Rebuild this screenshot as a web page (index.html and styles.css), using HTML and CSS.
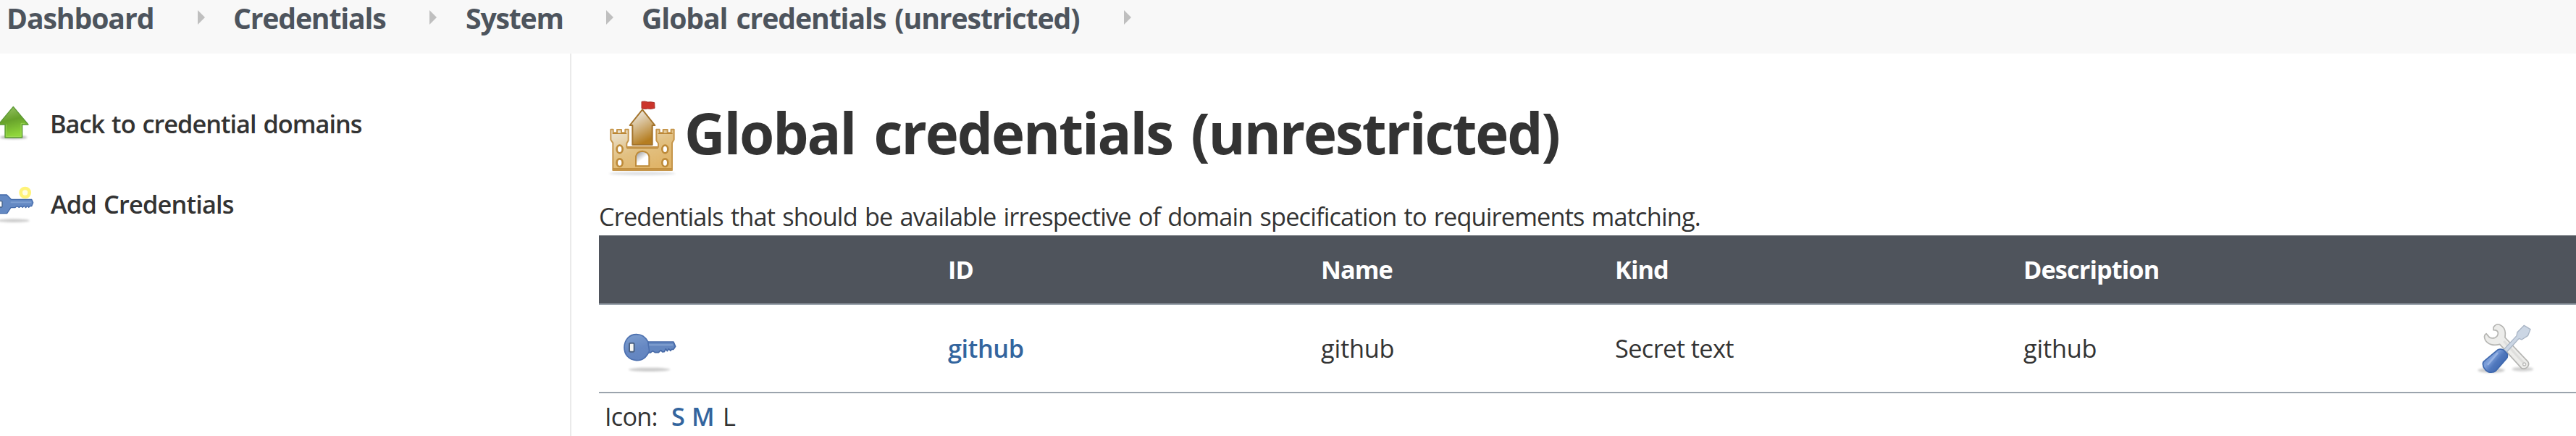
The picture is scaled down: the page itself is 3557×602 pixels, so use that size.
FILE: index.html
```html
<!DOCTYPE html>
<html lang="en">
<head>
<meta charset="utf-8">
<title>Global credentials (unrestricted)</title>
<link rel="stylesheet" href="styles.css">
</head>
<body>
<nav class="breadcrumbs">
  <a class="crumb crumb-dashboard">Dashboard</a><i class="chevron"></i>
  <a class="crumb crumb-credentials">Credentials</a><i class="chevron"></i>
  <a class="crumb crumb-system">System</a><i class="chevron"></i>
  <a class="crumb crumb-global">Global credentials (unrestricted)</a><i class="chevron"></i>
</nav>
<div class="page">
  <aside class="side-panel">
    <a class="task">
      <svg class="task-icon" width="50" height="56" viewBox="0 30 150 168">
        <defs>
          <linearGradient id="leaf" x1="0" y1="0" x2="0.25" y2="1"><stop offset="0" stop-color="#9cc66a"/><stop offset=".5" stop-color="#67a12b"/><stop offset="1" stop-color="#8fd63a"/></linearGradient>
          <filter id="soft" x="-30%" y="-100%" width="160%" height="300%"><feGaussianBlur stdDeviation="5"/></filter>
        </defs>
        <ellipse cx="56" cy="176" rx="56" ry="7" fill="#000" opacity=".3" filter="url(#soft)"/>
        <path d="M55 49 L117 123 H92 V177 H21 V123 H-7 Z" fill="url(#leaf)" stroke="#5c9a35" stroke-width="4" stroke-linejoin="round"/>
        <path d="M26 122 V172 H87 V118 H103" fill="none" stroke="#a5dc62" stroke-width="3" opacity=".7"/>
      </svg>
      <span class="task-label">Back to credential domains</span>
    </a>
    <a class="task">
      <svg class="task-icon" width="50" height="60" viewBox="0 360 150 180">
        <ellipse cx="56" cy="524" rx="66" ry="7" fill="#000" opacity=".2" filter="url(#soft)"/>
        <circle cx="104" cy="408" r="18" fill="#fffde0" stroke="#fff26a" stroke-width="14" opacity=".9"/>
        <path d="M-2 417 H28 L46 436 H131 L137 449 L131 464 H124 L119 469 L113 463 L107 470 L100 463 L94 469 L87 464 L79 469 L70 464 L62 470 H45 L29 494 H-2 Z" fill="#6489c3" stroke="#446bab" stroke-width="4" stroke-linejoin="round"/>
        <path d="M44 448 H130" stroke="#7fa0d2" stroke-width="6"/>
        <rect x="-8" y="443" width="17" height="25" rx="3" fill="#fff" stroke="#476287" stroke-width="4"/>
      </svg>
      <span class="task-label task-add">Add Credentials</span>
    </a>
  </aside>
  <main class="main-panel">
    <h1 class="heading">
      <svg class="castle" width="110" height="110" viewBox="90 45 330 330">
        <defs>
          <linearGradient id="tower" x1="0" y1="0" x2=".4" y2="1"><stop offset=".2" stop-color="#e9e2d4"/><stop offset="1" stop-color="#b57d20"/></linearGradient>
          <linearGradient id="wall" x1="0" y1="0" x2=".6" y2="1"><stop offset="0" stop-color="#ece7dc"/><stop offset=".55" stop-color="#e2c183"/><stop offset="1" stop-color="#e0b468"/></linearGradient>
          <linearGradient id="gate" x1="0" y1="0" x2=".7" y2="1"><stop offset=".1" stop-color="#9b9b9b"/><stop offset=".6" stop-color="#fff"/></linearGradient>
        </defs>
        <ellipse cx="260" cy="359" rx="138" ry="7" fill="#234" opacity=".15" filter="url(#soft)"/>
        <path d="M258 61 Q271 58 284 63 Q298 61 311 65 L312 88 Q298 93 284 90 Q270 93 258 89 Z" fill="#cb342b" stroke="#a92c27" stroke-width="3"/>
        <path d="M130 176 H140 V190 H156 V177 H174 V190 H190 V176 H203 V222 L196 234 V249 H327 V234 L319 222 V176 H332 V190 H347 V177 H365 V190 H380 V176 H392 V218 L384 232 V345 H139 V232 L130 219 Z" fill="url(#wall)" stroke="#c6964b" stroke-width="6" stroke-linejoin="round"/>
        <path d="M261 94 L313 159 H302 V240 H220 V159 H209 Z" fill="url(#tower)" stroke="#a3732b" stroke-width="6" stroke-linejoin="round"/>
        <path d="M137 193 H196 M326 193 H386 M196 254 H326 M140 339 H383" stroke="#b98432" stroke-width="4"/>
        <path d="M234 328 V287 Q238 268 261 266 Q285 269 289 288 V328 Z" fill="url(#gate)" stroke="#bd8a39" stroke-width="6"/>
        <g fill="#fff" stroke="#bd8a39" stroke-width="8"><ellipse cx="167" cy="258" rx="12" ry="16"/><ellipse cx="355" cy="258" rx="12" ry="16"/><ellipse cx="167" cy="314" rx="12" ry="16"/><ellipse cx="355" cy="314" rx="12" ry="16"/></g>
      </svg>
      <span class="heading-text">Global credentials (unrestricted)</span>
    </h1>
    <p class="description">Credentials that should be available irrespective of domain specification to requirements matching.</p>
    <table class="grid">
      <colgroup><col class="col-icon"><col class="col-id"><col class="col-name"><col class="col-kind"><col class="col-desc"><col></colgroup>
      <thead><tr><th></th><th>ID</th><th>Name</th><th>Kind</th><th>Description</th><th></th></tr></thead>
      <tbody><tr>
        <td class="icon-cell">
          <svg class="key" width="80" height="72" viewBox="51 66 240 216">
            <defs><linearGradient id="blue" x1="0" y1="0" x2=".3" y2="1"><stop offset=".2" stop-color="#7899cc"/><stop offset=".65" stop-color="#6688c3"/><stop offset="1" stop-color="#6385c0"/></linearGradient></defs>
            <ellipse cx="170" cy="244" rx="86" ry="8" fill="#000" opacity=".2" filter="url(#soft)"/>
            <path d="M164 129 H270 L278 148 L270 160 H262 L258 166 L250 158 L244 167 L238 158 L232 170 L224 171 L218 164 L208 173 H193 L184 167 L174 174 H162 Z" fill="#6487c0" stroke="#4568a6" stroke-width="5" stroke-linejoin="round"/>
            <path d="M158 142 H268" stroke="#82a1d0" stroke-width="6"/>
            <path d="M117 98 C141 98 153 109 164 128 L170 168 C156 194 143 206 117 206 C84 204 66 181 66 152 C67 121 86 98 117 98Z" fill="url(#blue)" stroke="#4c70af" stroke-width="5"/>
            <rect x="87" y="134" width="20" height="36" rx="5" fill="#f7f7f3" stroke="#4b6284" stroke-width="6"/>
          </svg>
        </td>
        <td><a class="link">github</a></td>
        <td class="github">github</td>
        <td>Secret text</td>
        <td class="github">github</td>
        <td class="icon-cell">
          <svg class="tools" width="90" height="80" viewBox="48 36 270 240">
            <defs><linearGradient id="handle" x1="0" y1="0" x2="1" y2=".8"><stop offset="0" stop-color="#426bb0"/><stop offset=".4" stop-color="#7fa1dc"/><stop offset=".6" stop-color="#5078bd"/><stop offset="1" stop-color="#365fa8"/></linearGradient></defs>
            <ellipse cx="120" cy="247" rx="56" ry="10" fill="#000" opacity=".2" filter="url(#soft)"/>
            <ellipse cx="250" cy="242" rx="44" ry="9" fill="#000" opacity=".18" filter="url(#soft)"/>
            <path d="M129 69 C137 57 148 54 157 59 C170 64 179 79 178 96 L177 111 L272 211 C281 227 266 245 246 239 L155 139 C128 147 105 139 95 121 C89 108 92 99 99 95 L112 110 Q122 116 135 112 Q149 105 148 91 Q146 80 129 80 Z" fill="#ececea" stroke="#b5b5b2" stroke-width="5" stroke-linejoin="round"/>
            <path d="M172 126 L255 217" stroke="#dededc" stroke-width="10"/>
            <circle cx="257" cy="222" r="6" fill="#fff" stroke="#bcbcba" stroke-width="4"/>
            <path d="M172 161 L225 104 L228 89 L256 61 L282 77 L272 103 L246 120 L235 115 L184 171 Z" fill="#cbd6e4" stroke="#a9b5c5" stroke-width="4" stroke-linejoin="round"/>
            <path d="M147 162 Q157 157 170 162 L186 178 Q190 190 183 199 L139 249 Q127 259 108 254 Q87 243 85 220 Q86 210 94 206 Z" fill="url(#handle)" stroke="#3e68ae" stroke-width="5"/>
            <path d="M145 177 L107 222" stroke="#a4bde8" stroke-width="8" stroke-linecap="round" opacity=".7"/>
          </svg>
        </td>
      </tr></tbody>
    </table>
    <div class="icon-size"><span class="size-label">Icon:</span><a class="link size-s">S</a><a class="link size-m">M</a><span class="size-l">L</span></div>
  </main>
</div>
</body>
</html>
```
FILE: styles.css
```css
* { box-sizing: border-box; }

body {
  margin: 0;
  overflow: hidden;
  background: #fff;
  color: #333;
  font: 34.3px/46px "Open Sans", "Noto Sans", sans-serif;
}

.breadcrumbs {
  display: flex;
  height: 74px;
  padding-left: 9px;
  background: #f8f8f8;
  color: #4d545d;
  font-size: 39.2px;
  font-weight: 700;
  line-height: 50px;
  letter-spacing: -0.9px;
}

.crumb { flex: none; white-space: nowrap; }
.crumb-dashboard { width: 264px; letter-spacing: -1.1px; }
.crumb-credentials { width: 271px; letter-spacing: -1.2px; }
.crumb-system { width: 195px; padding-left: 1px; letter-spacing: -1.2px; }
.crumb-global { width: 666px; letter-spacing: -1.1px; word-spacing: 3px; }

.chevron {
  flex: none;
  width: 10px;
  height: 20px;
  margin: 14px 39px 0 0;
  background: #bfbfbf;
  clip-path: polygon(0 0, 100% 50%, 0 100%);
}

.page { display: flex; height: 528px; }

.side-panel {
  flex: none;
  width: 789px;
  padding-top: 41px;
  border-right: 2px solid #eaeaea;
}

.task {
  display: flex;
  align-items: center;
  height: 111px;
  font-weight: 600;
  letter-spacing: -1px;
  word-spacing: 2px;
}

.task-icon { flex: none; margin-bottom: 3px; }
.task-label { margin-left: 19px; }
.task-add { margin-left: 20px; letter-spacing: -0.8px; }

.main-panel { flex: 1; min-width: 0; padding-left: 38px; }

.heading {
  display: flex;
  align-items: center;
  height: 110px;
  margin: 61px 0 0;
  padding-left: 3px;
  font-size: 78px;
  font-weight: 700;
  line-height: 110px;
  letter-spacing: -2.1px;
  word-spacing: 7px;
}

.castle { flex: none; }
.heading-text { margin: -15px 0 0 5px; }

.description {
  margin: 31px 0 0;
  height: 49px;
  letter-spacing: -0.84px;
  word-spacing: 2px;
}

.grid {
  width: 2730px;
  border-collapse: separate;
  border-spacing: 0;
  table-layout: fixed;
}

.col-icon { width: 462px; }
.col-id { width: 515px; }
.col-name { width: 406px; }
.col-kind { width: 564px; }
.col-desc { width: 622px; }

.grid th,
.grid td {
  padding: 0 0 0 20px;
  border-bottom: 2px solid #9ba4ad;
  text-align: left;
  vertical-align: middle;
}

.grid th {
  height: 96px;
  padding-bottom: 1px;
  background: #4f545c;
  color: #fff;
  font-weight: 700;
  letter-spacing: -0.9px;
}

.grid td { height: 122px; letter-spacing: -0.6px; }
.grid .github { letter-spacing: -0.2px; }
.grid .link { letter-spacing: -0.4px; }
.grid .icon-cell { line-height: 0; }

.key { display: block; margin: 12px 0 0 10px; }
.tools { display: block; }
.link { color: #33659e; font-weight: 600; }

.icon-size { display: flex; padding: 9px 0 0 8px; }
.size-label { width: 92px; letter-spacing: -0.8px; }
.size-s { width: 28px; }
.size-m { width: 43px; }
```
